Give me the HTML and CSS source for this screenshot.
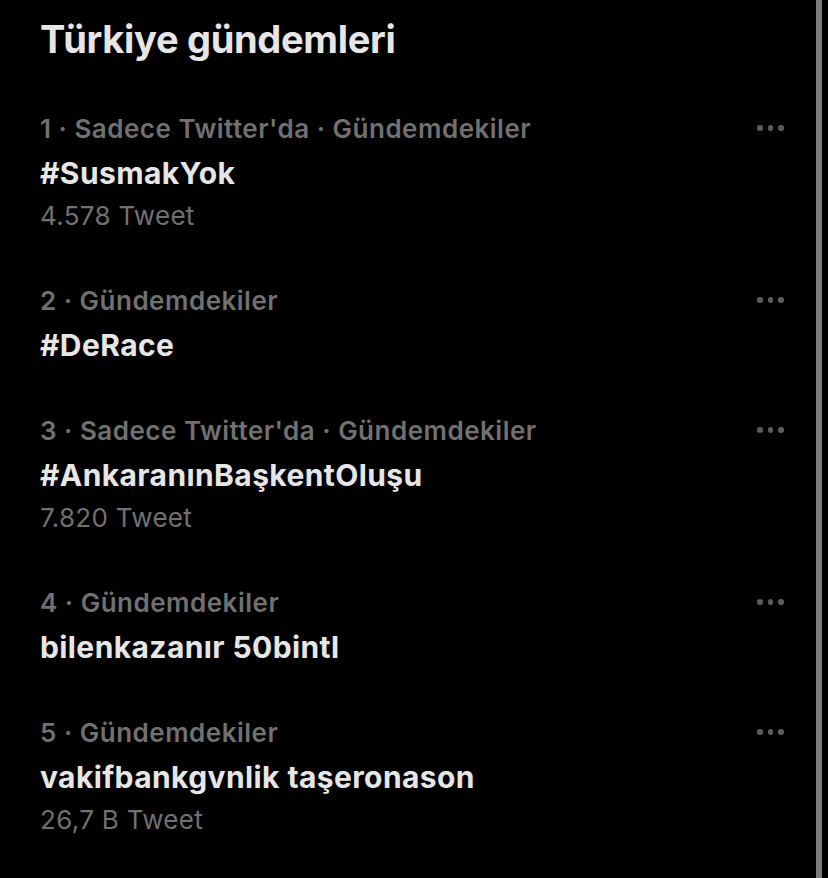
FILE: index.html
```html
<!DOCTYPE html>
<html lang="tr">
<head>
<meta charset="utf-8">
<title>Türkiye gündemleri</title>
<link rel="stylesheet" href="styles.css">
</head>
<body>
<div class="screen">
  <main class="panel">
    <h1 class="title">Türkiye gündemleri</h1>
    <ul class="trends">
      <li class="trend">
        <div class="meta-row">
          <span class="meta">1 · Sadece Twitter'da · Gündemdekiler</span>
          <span class="more"><i></i><i></i><i></i></span>
        </div>
        <div class="name">#SusmakYok</div>
        <div class="count">4.578 Tweet</div>
      </li>
      <li class="trend">
        <div class="meta-row">
          <span class="meta">2 · Gündemdekiler</span>
          <span class="more"><i></i><i></i><i></i></span>
        </div>
        <div class="name">#DeRace</div>
      </li>
      <li class="trend">
        <div class="meta-row">
          <span class="meta">3 · Sadece Twitter'da · Gündemdekiler</span>
          <span class="more"><i></i><i></i><i></i></span>
        </div>
        <div class="name">#AnkaranınBaşkentOluşu</div>
        <div class="count">7.820 Tweet</div>
      </li>
      <li class="trend">
        <div class="meta-row">
          <span class="meta">4 · Gündemdekiler</span>
          <span class="more"><i></i><i></i><i></i></span>
        </div>
        <div class="name">bilenkazanır 50bintl</div>
      </li>
      <li class="trend">
        <div class="meta-row">
          <span class="meta">5 · Gündemdekiler</span>
          <span class="more"><i></i><i></i><i></i></span>
        </div>
        <div class="name">vakifbankgvnlik taşeronason</div>
        <div class="count">26,7 B Tweet</div>
      </li>
    </ul>
  </main>
  <div class="scrollbar"></div>
</div>
</body>
</html>
```
FILE: styles.css
```css
html, body {
  margin: 0;
  padding: 0;
  background: #000;
}
body {
  font-family: Inter, "Noto Sans", "Liberation Sans", sans-serif;
  -webkit-font-smoothing: antialiased;
}
.screen {
  display: flex;
  width: 828px;
  height: 878px;
  overflow: hidden;
}
.panel {
  flex: 1;
  padding: 15px 32px 0 40px;
}
.scrollbar {
  width: 6px;
  margin-right: 6px;
  background: #7c7c7c;
}
.title {
  margin: 0;
  font-size: 38px;
  line-height: 48px;
  font-weight: 700;
  color: #e6e6e6;
  letter-spacing: -0.3px;
}
.trends {
  list-style: none;
  margin: 43px 0 0;
  padding: 0;
  display: flex;
  flex-direction: column;
  gap: 41px;
}
.meta-row {
  display: flex;
  justify-content: space-between;
  align-items: center;
  height: 45px;
}
.meta {
  font-size: 26px;
  line-height: 45px;
  font-weight: 600;
  color: #717171;
  letter-spacing: 0.5px;
}
.more {
  display: flex;
  gap: 5px;
  margin-top: -1px;
}
.more i {
  width: 5.6px;
  height: 5.6px;
  border-radius: 50%;
  background: #5c5c5c;
}
.name {
  font-size: 30px;
  line-height: 44px;
  font-weight: 700;
  color: #e6e6e6;
  letter-spacing: 0.4px;
}
.count {
  font-size: 26px;
  line-height: 42px;
  font-weight: 400;
  color: #717171;
  letter-spacing: 0.3px;
}
```
